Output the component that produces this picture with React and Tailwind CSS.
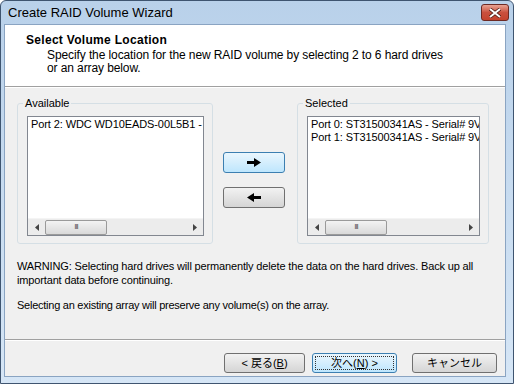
import React from 'react'

// small win32-ish arrow drawn in svg
function Arrow({ dir }) {
  return (
    <svg width="14" height="9" viewBox="0 0 14 9">
      {dir === 'right' ? (
        <path d="M0 3h7V0l7 4.5L7 9V6H0z" fill="#000" />
      ) : (
        <path d="M14 3H7V0L0 4.5 7 9V6h7z" fill="#000" />
      )}
    </svg>
  )
}

function ListBox({ items }) {
  return (
    <div className="flex flex-col flex-1 min-w-0 border border-[#828790] bg-white">
      <div className="flex-1 min-w-0 px-[3px] pt-[1px] overflow-hidden whitespace-nowrap text-[11px] leading-[13px] tracking-[-0.1px] text-black">
        {items.map((t) => (
          <div key={t}>{t}</div>
        ))}
      </div>
      <div className="flex items-center h-[17px] bg-[#ececec] border-t border-[#f4f4f4]">
        <div className="w-[17px] h-full flex items-center justify-center">
          <svg width="4" height="7" viewBox="0 0 4 7"><path d="M4 0v7L0 3.5z" fill="#444" /></svg>
        </div>
        <div className="w-[62px] h-[15px] rounded-[2px] border border-[#9a9a9a] bg-gradient-to-b from-[#f3f3f3] to-[#d9d9d9] flex items-center justify-center">
          <span className="text-[8px] leading-none text-[#555] tracking-[-1px]">III</span>
        </div>
        <div className="flex-1" />
        <div className="w-[17px] h-full flex items-center justify-center">
          <svg width="4" height="7" viewBox="0 0 4 7"><path d="M0 0v7l4-3.5z" fill="#444" /></svg>
        </div>
      </div>
    </div>
  )
}

function Group({ label, items, width }) {
  return (
    <fieldset className={`${width} min-w-0 shrink-0 h-[147px] border border-[#d5dfe5] rounded-[3px] pl-[9px] pr-[8px] pb-[7px] flex flex-col`}>
      <legend className="ml-[-4px] px-[2px] text-[11px] leading-[12px] text-black">{label}</legend>
      <div className="h-[7px]" />
      <ListBox items={items} />
    </fieldset>
  )
}

function Btn({ children, blue, focus, width }) {
  return (
    <button
      className={
        width +
        ' h-[20px] rounded-[3px] border text-[11px] leading-none text-black flex items-center justify-center p-[2px] ' +
        (blue
          ? 'border-[#3c7fb1] bg-gradient-to-b from-[#eaf6fd] to-[#bee6fd]'
          : 'border-[#707070] bg-gradient-to-b from-[#f2f2f2] to-[#d5d5d5]')
      }
    >
      <span className={'w-full h-full flex items-center justify-center ' + (focus ? 'border border-dotted border-[#333]' : '')}>
        {children}
      </span>
    </button>
  )
}

export default function App() {
  const font = { fontFamily: '"Liberation Sans", "Noto Sans CJK JP", sans-serif' }
  return (
    <div
      style={font}
      className="w-[514px] h-[384px] flex flex-col bg-gradient-to-b from-[#b9d1ea] to-[#d6e6f6] border border-[#3f5570] rounded-t-[6px] overflow-hidden"
    >
      {/* title bar */}
      <div className="h-[23px] flex items-center pl-[7px] pr-[4px]">
        <span className="text-[13px] text-black flex-1">Create RAID Volume Wizard</span>
        <div className="w-[28px] h-[17px] rounded-[3px] border border-[#6d2a24] bg-gradient-to-b from-[#e8a394] via-[#c9503e] to-[#c5432e] flex items-center justify-center">
          <svg width="12" height="10" viewBox="0 0 12 10">
            <path d="M1 1l10 8M11 1L1 9" stroke="#4a1a14" strokeWidth="3.4" />
            <path d="M1 1l10 8M11 1L1 9" stroke="#fff" strokeWidth="2" />
          </svg>
        </div>
      </div>

      {/* client */}
      <div className="flex-1 ml-[3px] mr-[7px] mb-[6px] flex flex-col bg-[#f0f0f0] border border-[#8aa4c2]">
        {/* header */}
        <div className="h-[62px] bg-white border-b border-[#a0a0a0] pl-[21px] pt-[8px]">
          <div className="text-[12px] leading-[15px] font-bold tracking-[0.3px] text-black">Select Volume Location</div>
          <div className="pl-[21px] text-[12px] leading-[13px] tracking-[-0.1px] text-black mt-[1px]">
            Specify the location for the new RAID volume by selecting 2 to 6 hard drives
            <br />
            or an array below.
          </div>
        </div>
        <div className="h-px bg-white" />

        {/* body */}
        <div className="flex-1 flex flex-col px-[12px] pt-[9px]">
          <div className="flex items-start">
            <Group label="Available" width="w-[196px]" items={['Port 2: WDC WD10EADS-00L5B1 - WD-WCAU45012345']} />
            <div className="flex flex-col gap-[14px] ml-[10px] mr-[12px] mt-[55px]">
              <button className="w-[62px] h-[21px] rounded-[3px] border border-[#3c7fb1] bg-gradient-to-b from-[#eaf6fd] to-[#bee6fd] flex items-center justify-center">
                <Arrow dir="right" />
              </button>
              <button className="w-[62px] h-[21px] rounded-[3px] border border-[#707070] bg-gradient-to-b from-[#f2f2f2] to-[#d5d5d5] flex items-center justify-center">
                <Arrow dir="left" />
              </button>
            </div>
            <Group
              label="Selected"
              width="w-[192px]"
              items={[
                'Port 0: ST31500341AS - Serial# 9VS0ABCD',
                'Port 1: ST31500341AS - Serial# 9VS0EFGH',
              ]}
            />
          </div>

          <div className="mt-[15px] text-[11px] leading-[14px] tracking-[-0.15px] text-black">
            WARNING: Selecting hard drives will permanently delete the data on the hard drives. Back up all
            <br />
            important data before continuing.
          </div>
          <div className="mt-[11px] text-[11px] leading-[14px] tracking-[-0.25px] text-black">
            Selecting an existing array will preserve any volume(s) on the array.
          </div>
        </div>

        {/* footer */}
        <div className="border-t border-[#a0a0a0]">
          <div className="border-t border-white h-[36px] flex items-start justify-end pt-[12px] pr-[8px]">
            <Btn width="w-[81px]">
              &lt; 戻る(<span className="underline">B</span>)
            </Btn>
            <div className="w-[7px]" />
            <Btn width="w-[85px]" blue focus>
              次へ(<span className="underline">N</span>) &gt;
            </Btn>
            <div className="w-[15px]" />
            <Btn width="w-[85px]">キャンセル</Btn>
          </div>
        </div>
      </div>
    </div>
  )
}
